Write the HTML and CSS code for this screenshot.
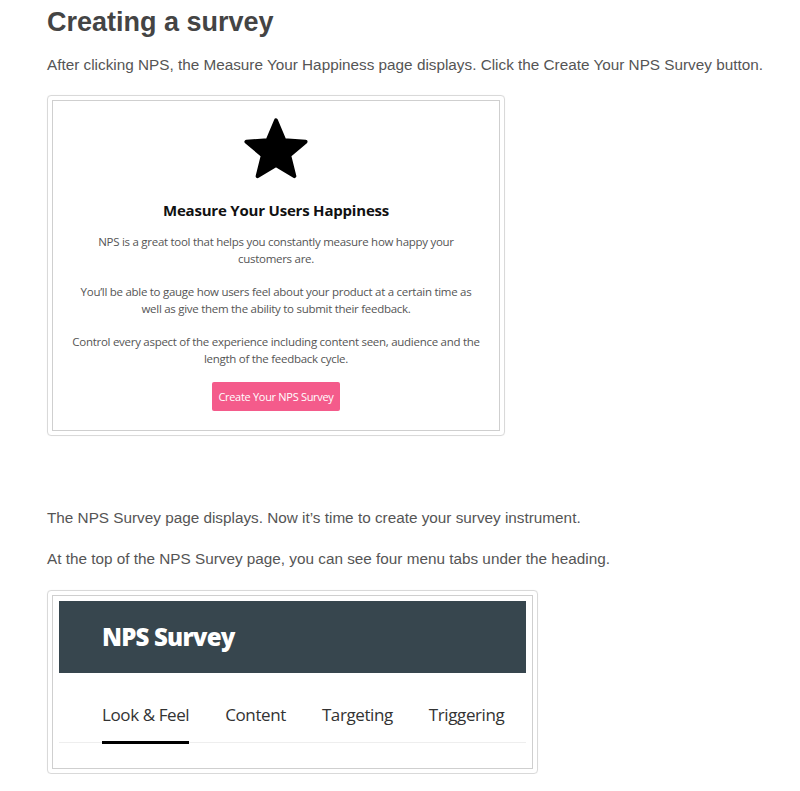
FILE: index.html
```html
<!DOCTYPE html>
<html>
<head>
<meta charset="utf-8">
<link rel="stylesheet" href="styles.css">
</head>
<body>
<main class="doc">
  <h1 class="title">Creating a survey</h1>
  <p class="para">After clicking NPS, the Measure Your Happiness page displays. Click the Create Your NPS Survey button.</p>

  <div class="shot shot-one">
    <div class="shot-inner happy">
      <svg class="star" width="70" height="66" viewBox="0 0 24 23">
        <path d="M12 1.2 L14.9 8.1 L22.3 8.6 L16.6 13.4 L18.4 20.6 L12 16.7 L5.6 20.6 L7.4 13.4 L1.7 8.6 L9.1 8.1 Z" fill="#000" stroke="#000" stroke-width="1.4" stroke-linejoin="round"/>
      </svg>
      <h2 class="happy-title">Measure Your Users Happiness</h2>
      <p class="happy-text">NPS is a great tool that helps you constantly measure how happy your<br>customers are.</p>
      <p class="happy-text">You’ll be able to gauge how users feel about your product at a certain time as<br>well as give them the ability to submit their feedback.</p>
      <p class="happy-text">Control every aspect of the experience including content seen, audience and the<br>length of the feedback cycle.</p>
      <span class="btn">Create Your NPS Survey</span>
    </div>
  </div>

  <p class="para para-gap">The NPS Survey page displays. Now it’s time to create your survey instrument.</p>
  <p class="para">At the top of the NPS Survey page, you can see four menu tabs under the heading.</p>

  <div class="shot shot-two">
    <div class="shot-inner survey">
      <div class="survey-head">NPS Survey</div>
      <nav class="tabs">
        <span class="tab active">Look &amp; Feel</span>
        <span class="tab">Content</span>
        <span class="tab">Targeting</span>
        <span class="tab">Triggering</span>
      </nav>
    </div>
  </div>
</main>
</body>
</html>
```

FILE: styles.css
```css
* { box-sizing: border-box; }
html, body { margin: 0; padding: 0; background: #fff; }
body { font-family: "Liberation Sans", Arial, sans-serif; color: #555; }

.doc { padding: 0 0 0 47px; }

.title {
  margin: 0;
  padding-top: 6px;
  font-size: 27px;
  line-height: 32px;
  font-weight: 700;
  color: #444;
}

.para {
  margin: 17px 0 0;
  font-size: 15.3px;
  line-height: 20px;
  color: #555;
}
.para-gap { margin-top: 72px; }
.para + .para { margin-top: 21px; }

.shot {
  border: 1px solid #d9d9d9;
  border-radius: 4px;
  padding: 4px;
  box-shadow: 0 0 1px rgba(0,0,0,0.08);
}
.shot-inner { border: 1px solid #cfcfcf; }

.shot-one { width: 458px; height: 341px; margin-top: 20px; }
.shot-one .shot-inner { height: 100%; }

.happy {
  display: flex;
  flex-direction: column;
  align-items: center;
  font-family: "Open Sans", "Noto Sans", sans-serif;
  text-align: center;
}
.star { margin-top: 16px; display: block; }
.happy-title {
  margin: 17px 0 0;
  font-size: 15px;
  line-height: 20px;
  font-weight: 700;
  color: #111;
  letter-spacing: -0.2px;
}
.happy-text {
  margin: 17px 0 0;
  width: 430px;
  font-size: 11.5px;
  line-height: 16.5px;
  color: #555;
  letter-spacing: -0.28px;
}
.happy-title + .happy-text { margin-top: 14px; }
.btn {
  margin-top: 15px;
  display: inline-block;
  background: #f45b8b;
  color: #fff;
  border-radius: 2px;
  width: 128px;
  height: 29px;
  line-height: 29px;
  font-size: 11px;
  letter-spacing: -0.3px;
}

.shot-two { width: 491px; height: 184px; margin-top: 21px; }
.shot-two .shot-inner { height: 100%; padding: 5px 6px 0; }
.survey { font-family: "Open Sans", "Noto Sans", sans-serif; }
.survey-head {
  background: #37464e;
  height: 72px;
  color: #fff;
  font-size: 24px;
  font-weight: 800;
  padding-left: 43px;
  line-height: 72px;
  letter-spacing: -0.8px;
}
.tabs {
  display: flex;
  gap: 36px;
  padding-left: 43px;
  padding-top: 29px;
  border-bottom: 1px solid #eee;
}
.tab {
  font-size: 17px;
  line-height: 26px;
  color: #333;
  padding-bottom: 13px;
  border-bottom: 3px solid transparent;
  letter-spacing: -0.4px;
  margin-bottom: -2px;
}
.tab.active { border-bottom-color: #000; }
```
